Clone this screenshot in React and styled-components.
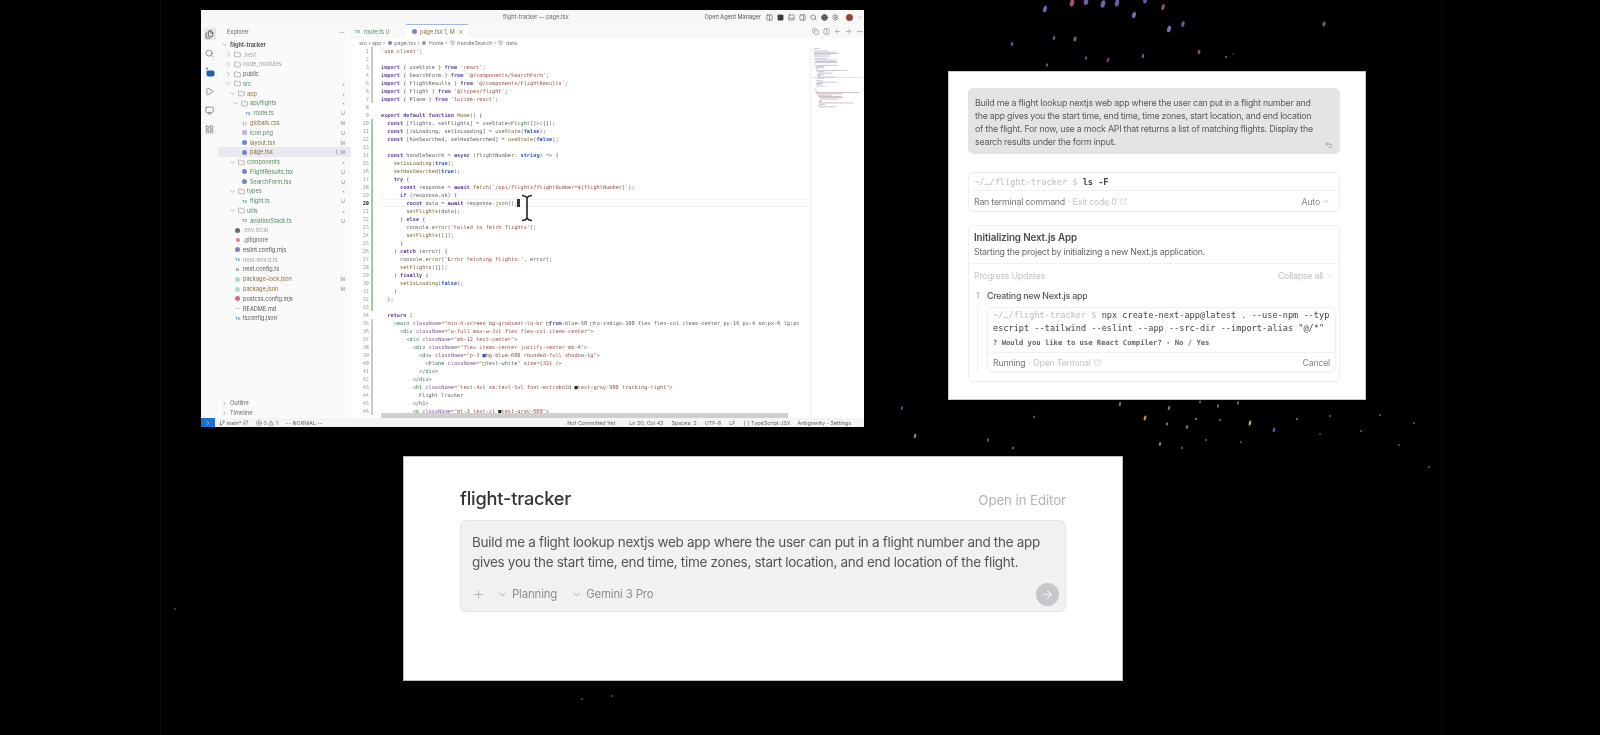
import React from 'react';
import styled, { createGlobalStyle } from 'styled-components';
import {
  ArrowLeft,
  ArrowRight,
  Box,
  ChevronDown,
  ChevronRight,
  ChevronUp,
  Copy,
  Ellipsis,
  Files,
  Folder,
  GitBranch,
  Globe,
  Monitor,
  PanelBottom,
  PanelLeft,
  PanelRight,
  Play,
  Plus,
  RefreshCw,
  Search,
  Settings,
  SquareArrowOutUpRight,
  Undo2,
  X,
  LayoutGrid,
  Columns2,
  CircleX,
  TriangleAlert,
} from 'lucide-react';

const UI_FONT = `Inter, "Liberation Sans", sans-serif`;
const MONO_FONT = `"DejaVu Sans Mono", "Liberation Mono", monospace`;

const GlobalStyle = createGlobalStyle`
  html, body {
    margin: 0;
    background: #000;
    font-family: ${UI_FONT};
  }
`;

/* ---------- data ---------- */

const TREE = [
  { name: 'flight-tracker', pad: 3, kind: 'root', color: '#3c3c3c', bold: true },
  { name: '.next', pad: 7, kind: 'closed', color: '#a2a2a2' },
  { name: 'node_modules', pad: 7, kind: 'closed', color: '#a2a2a2' },
  { name: 'public', pad: 7, kind: 'closed', color: '#555' },
  { name: 'src', pad: 7, kind: 'open', color: '#4f7f5a', badge: '•' },
  { name: 'app', pad: 11, kind: 'open', color: '#8b7a3c', badge: '•' },
  { name: 'api/flights', pad: 14, kind: 'open', color: '#4f8a5f', badge: '•' },
  { name: 'route.ts', pad: 26.6, icon: 'ts', color: '#4f8a5f', badge: 'U' },
  { name: 'globals.css', pad: 23, icon: 'css', color: '#8b6b3c', badge: 'M' },
  { name: 'icon.png', pad: 23, icon: 'img', color: '#4f8a5f', badge: 'U' },
  { name: 'layout.tsx', pad: 23, icon: 'react', color: '#8b6b3c', badge: 'M' },
  { name: 'page.tsx', pad: 23, icon: 'react', color: '#8b6b3c', badge: '1, M', active: true },
  { name: 'components', pad: 11, kind: 'open', color: '#4f8a5f', badge: '•' },
  { name: 'FlightResults.tsx', pad: 23, icon: 'react', color: '#4f8a5f', badge: 'U' },
  { name: 'SearchForm.tsx', pad: 23, icon: 'react', color: '#4f8a5f', badge: 'U' },
  { name: 'types', pad: 11, kind: 'open', color: '#4f8a5f', badge: '•' },
  { name: 'flight.ts', pad: 23, icon: 'ts', color: '#4f8a5f', badge: 'U' },
  { name: 'utils', pad: 11, kind: 'open', color: '#4f8a5f', badge: '•' },
  { name: 'aviationStack.ts', pad: 23, icon: 'ts', color: '#4f8a5f', badge: 'U' },
  { name: '.env.local', pad: 16, icon: 'env', color: '#a2a2a2' },
  { name: '.gitignore', pad: 16, icon: 'git', color: '#666' },
  { name: 'eslint.config.mjs', pad: 16, icon: 'eslint', color: '#555' },
  { name: 'next-env.d.ts', pad: 16, icon: 'ts', color: '#a2a2a2' },
  { name: 'next.config.ts', pad: 16, icon: 'next', color: '#555' },
  { name: 'package-lock.json', pad: 16, icon: 'json', color: '#8b6b3c', badge: 'M' },
  { name: 'package.json', pad: 16, icon: 'json', color: '#8b6b3c', badge: 'M' },
  { name: 'postcss.config.mjs', pad: 16, icon: 'postcss', color: '#555' },
  { name: 'README.md', pad: 16, icon: 'md', color: '#555' },
  { name: 'tsconfig.json', pad: 16, icon: 'ts', color: '#555' },
];

const CODE = [
  `'use client';`,
  ``,
  `import { useState } from 'react';`,
  `import { SearchForm } from '@/components/SearchForm';`,
  `import { FlightResults } from '@/components/FlightResults';`,
  `import { Flight } from '@/types/flight';`,
  `import { Plane } from 'lucide-react';`,
  ``,
  `export default function Home() {`,
  `  const [flights, setFlights] = useState<Flight[]>([]);`,
  `  const [isLoading, setIsLoading] = useState(false);`,
  `  const [hasSearched, setHasSearched] = useState(false);`,
  ``,
  `  const handleSearch = async (flightNumber: string) => {`,
  `    setIsLoading(true);`,
  `    setHasSearched(true);`,
  `    try {`,
  '      const response = await fetch(`/api/flights?flightNumber=${flightNumber}`);',
  `      if (response.ok) {`,
  `        const data = await response.json();`,
  `        setFlights(data);`,
  `      } else {`,
  `        console.error('Failed to fetch flights');`,
  `        setFlights([]);`,
  `      }`,
  `    } catch (error) {`,
  `      console.error('Error fetching flights:', error);`,
  `      setFlights([]);`,
  `    } finally {`,
  `      setIsLoading(false);`,
  `    }`,
  `  };`,
  ``,
  `  return (`,
  `    <main className="min-h-screen bg-gradient-to-br □from-blue-50 □to-indigo-100 flex flex-col items-center py-16 px-4 sm:px-6 lg:px`,
  `      <div className="w-full max-w-3xl flex flex-col items-center">`,
  `        <div className="mb-12 text-center">`,
  `          <div className="flex items-center justify-center mb-4">`,
  `            <div className="p-3 ■bg-blue-600 rounded-full shadow-lg">`,
  `              <Plane className="□text-white" size={32} />`,
  `            </div>`,
  `          </div>`,
  `          <h1 className="text-4xl sm:text-5xl font-extrabold ■text-gray-900 tracking-tight">`,
  `            Flight Tracker`,
  `          </h1>`,
  `          <p className="mt-3 text-xl ■text-gray-600">`,
];

const TOKEN_RE = /(■(?=bg-blue))|([■□])|('[^']*'|`[^`]*`)|(className)(?==)|("[^"□■]*"?|[a-z0-9:-]+(?=[^"]*">?$)(?<=className=".*))|\b(import|from|export|default|function|const|async|await|try|catch|finally|if|else|return)\b|\b(true|false|string)\b|\b([a-zA-Z]+)(?=\()|(<\/?[a-zA-Z0-9]+)/g;

const CLASS_WORD = {
  1: 'blue',
  2: 'box',
  3: 'string',
  4: 'attr',
  5: 'string',
  6: 'keyword',
  7: 'literal',
  8: 'fn',
  9: 'tag',
};

const tokenize = (line) => {
  const out = [];
  let last = 0;
  for (const m of line.matchAll(TOKEN_RE)) {
    if (m.index > last) out.push({ text: line.slice(last, m.index), type: 'plain' });
    const group = m.findIndex((g, i) => i > 0 && g !== undefined);
    out.push({ text: m[0], type: CLASS_WORD[group] });
    last = m.index + m[0].length;
  }
  if (last < line.length) out.push({ text: line.slice(last), type: 'plain' });
  return out;
};

const SPARKS = [
  [1045, 9, '#7a7ad0', 1.9, 3.4], [1072, 3, '#c06080', 2.2, 3.6], [1086, 2, '#8a70c0', 2.2, 3],
  [1103, 4, '#8a6fc8', 2.2, 3.8], [1117, 3, '#7a70c8', 2.1, 3.6], [1145, 1, '#7a70c8', 1.8, 2.6],
  [1163, 7, '#c06060', 1.6, 3], [1134, 15, '#7f7fd0', 1.9, 3.2], [1169, 29, '#8a80d8', 1.9, 3.4],
  [1183, 24, '#6a78d0', 1.6, 2.8], [1324, 24, '#7a70c0', 1.5, 2.6], [1012, 44, '#6a7ab0', 1.2, 2],
  [1054, 38, '#6a7ab0', 1.2, 2], [1075, 39, '#b06090', 1.5, 2.6], [1086, 58, '#6a70b0', 1, 1.7],
  [1108, 60, '#905090', 1.3, 2.2], [1143, 56, '#6a70b0', 1.2, 2.2], [1199, 52, '#b06080', 1.4, 2.2],
  [1226, 57, '#777', 1, 1.2], [1233, 54, '#666', 0.7, 0.8], [1047, 65, '#777', 1, 1.8],
  [902, 408, '#6a70b0', 1, 1.8], [1034, 417, '#5a6a90', 1, 1.4], [915, 436, '#a8b060', 1.2, 2.2],
  [988, 440, '#6a78a0', 1, 1.8], [1013, 448, '#6a78a0', 1, 1.6], [1120, 404, '#7a8a9a', 1.2, 2.2],
  [1169, 408, '#7a8aa0', 1.2, 2.2], [1218, 406, '#7a8a9a', 1, 1.8], [1238, 403, '#7a8a8a', 1, 1.8],
  [1200, 402, '#6a7a7a', 0.9, 1.6], [1145, 418, '#e0b060', 1.3, 2.6], [1167, 424, '#7a8aa0', 1.1, 1.8],
  [1187, 427, '#7a8aa0', 1.2, 2], [1196, 419, '#8a9090', 1, 1.2], [1220, 420, '#7a8a9a', 0.9, 1.2],
  [1250, 423, '#e0c870', 1.3, 2.6], [1274, 430, '#6a70c0', 1.2, 2.2], [1297, 419, '#8a9090', 1, 1.1],
  [1330, 416, '#8a9090', 0.8, 1], [1380, 415, '#808888', 0.9, 0.9], [1414, 423, '#6a7090', 0.9, 1.2],
  [1361, 431, '#808888', 0.9, 1], [1320, 434, '#808888', 0.8, 0.8], [1399, 445, '#808888', 0.8, 1],
  [1429, 467, '#808888', 0.9, 1], [1206, 440, '#6a7a8a', 0.9, 1.2], [1241, 442, '#707a70', 0.8, 1.2],
  [1160, 444, '#8a90a0', 1.2, 2], [1182, 448, '#6a7a9a', 0.9, 1.4], [582, 699, '#777', 0.8, 1],
  [612, 696, '#777', 0.8, 1], [175, 609, '#667', 0.8, 1],
];

/* ---------- page ---------- */

const Page = styled.div`
  width: 1600px;
  height: 735px;
  background: #000;
  overflow: hidden;
`;

const Stage = styled.div`
  position: relative;
  margin-left: 160px;
  width: 1282px;
  height: 735px;
  box-sizing: border-box;
  border-left: 1px solid #0b0b0b;
  border-right: 1px solid #0b0b0b;
`;

const SparkField = styled.svg`
  position: absolute;
  left: -161px;
  top: 0;
  opacity: 0.85;
  filter: blur(0.4px);
`;

/* ---------- IDE window ---------- */

const IdeWindow = styled.div`
  position: absolute;
  left: 40px;
  top: 10px;
  width: 663px;
  height: 417px;
  display: flex;
  flex-direction: column;
  background: #fff;
  overflow: hidden;
  filter: blur(0.5px);
  color: #555;
`;

const TitleBar = styled.div`
  position: relative;
  flex: 0 0 14px;
  display: flex;
  align-items: center;
  justify-content: flex-end;
  padding-right: 2px;
  gap: 4px;
  background: #f7f7f7;
  font-size: 5.6px;
`;

const WindowTitle = styled.span`
  position: absolute;
  left: 302px;
  color: #666;
`;

const AgentLink = styled.span`
  color: #555;
  margin-right: 1px;
`;

const Avatar = styled.span`
  width: 7px;
  height: 7px;
  border-radius: 50%;
  margin-left: 3px;
  background: #8a4a38;
`;

const Body = styled.div`
  flex: 1;
  display: flex;
  min-height: 0;
`;

const ActivityBar = styled.div`
  flex: 0 0 17px;
  display: flex;
  flex-direction: column;
  align-items: center;
  padding-top: 4px;
  gap: 7.1px;
  background: #f8f8f8;
  color: #777;
`;

const ActivityItem = styled.div`
  width: 12px;
  height: 12px;
  display: flex;
  align-items: center;
  justify-content: center;
  border-radius: 2px;
  background: ${(p) => (p.$active ? '#e6e6e6' : 'transparent')};
  color: ${(p) => (p.$active ? '#444' : '#777')};
`;

const Sidebar = styled.div`
  flex: 0 0 133px;
  display: flex;
  flex-direction: column;
  background: #fafafa;
  font-size: 5.6px;
  white-space: nowrap;
`;

const SidebarHeader = styled.div`
  flex: 0 0 16px;
  display: flex;
  align-items: center;
  justify-content: space-between;
  padding: 0 6px 0 9px;
  color: #666;
`;

const TreeRow = styled.div`
  height: 9.77px;
  display: flex;
  align-items: center;
  gap: 2px;
  padding-left: ${(p) => p.$pad}px;
  padding-right: 6px;
  background: ${(p) => (p.$active ? '#e9e9ef' : 'transparent')};
  color: ${(p) => p.$color};
  font-weight: ${(p) => (p.$bold ? 600 : 400)};
`;

const TreeBadge = styled.span`
  margin-left: auto;
  color: #888;
  font-size: 5px;
`;

const SidebarFooter = styled.div`
  margin-top: auto;
  color: #666;
`;

const IconBox = styled.span`
  flex: 0 0 7px;
  height: 7px;
  display: flex;
  align-items: center;
  justify-content: center;
  color: ${(p) => p.$color || '#888'};
  font-size: 3.8px;
  font-weight: 700;
`;

const Dot = styled.span`
  width: ${(p) => p.$size || 5}px;
  height: ${(p) => p.$size || 5}px;
  border-radius: ${(p) => p.$radius || '50%'};
  background: ${(p) => p.$color};
`;

const Editor = styled.div`
  position: relative;
  flex: 1;
  display: flex;
  flex-direction: column;
  min-width: 0;
`;

const TabStrip = styled.div`
  flex: 0 0 14px;
  display: flex;
  background: #f8f8f8;
  font-size: 5.6px;
`;

const Tab = styled.div`
  display: flex;
  align-items: center;
  gap: 3px;
  width: ${(p) => p.$width}px;
  box-sizing: border-box;
  padding-left: ${(p) => (p.$active ? 6 : 3)}px;
  background: ${(p) => (p.$active ? '#fff' : 'transparent')};
  border-top: 1px solid ${(p) => (p.$active ? '#9db8dc' : 'transparent')};
  color: ${(p) => p.$color};
`;

const TabActions = styled.div`
  margin-left: auto;
  display: flex;
  align-items: center;
  gap: 4px;
  padding-right: 1px;
  color: #888;
`;

const Breadcrumb = styled.div`
  flex: 0 0 9px;
  display: flex;
  align-items: center;
  gap: 2.5px;
  padding-left: 8px;
  font-size: 5.4px;
  color: #777;
`;

const EditorBody = styled.div`
  flex: 1;
  display: flex;
  min-height: 0;
`;

const CodeArea = styled.div`
  flex: 1;
  min-width: 0;
  overflow: hidden;
`;

const CodeLine = styled.div`
  height: 8px;
  display: flex;
  align-items: center;
  font-family: ${MONO_FONT};
  font-size: 5.28px;
  white-space: pre;
`;

const CodeText = styled.span`
  flex: 1;
  line-height: 8px;
  ${(p) => p.$current && 'box-shadow: inset 0 1px 0 #f2f2f2, inset 0 -1px 0 #f2f2f2;'}
`;

const LineNumber = styled.span`
  flex: 0 0 18px;
  text-align: right;
  color: ${(p) => (p.$current ? '#222' : '#999')};
  font-weight: ${(p) => (p.$current ? 700 : 400)};
`;

const Marker = styled.span`
  flex: 0 0 2px;
  height: 8px;
  margin: 0 8px 0 2px;
  background: ${(p) => p.$color};
`;

const Token = styled.span`
  color: ${(p) =>
    ({
      plain: '#5a5a5a',
      keyword: '#5b3f8f',
      string: '#8c4f4a',
      attr: '#7a5a8a',
      literal: '#2c50a8',
      fn: '#6f6430',
      tag: '#40734f',
      box: '#222',
      blue: '#2a4fc0',
    })[p.$type]};
  font-weight: ${(p) => (p.$type === 'keyword' || p.$type === 'literal' ? 600 : 400)};
`;

const TextCursor = styled.span`
  position: absolute;
  left: 166px;
  top: 175px;
  width: 2.5px;
  height: 8px;
  background: #333;
`;

const Minimap = styled.svg`
  flex: 0 0 53px;
  border-left: 1px solid #f1f1f1;
`;

const ScrollThumb = styled.div`
  position: absolute;
  left: 30px;
  right: 76px;
  bottom: 0;
  height: 5px;
  background: #cfcfcf;
`;

const MouseCursor = styled.svg`
  position: absolute;
  left: 169px;
  top: 170px;
`;

const StatusBar = styled.div`
  flex: 0 0 9px;
  display: flex;
  align-items: center;
  background: #f4f4f4;
  font-size: 5.4px;
  color: #666;
  white-space: nowrap;
`;

const RemoteBox = styled.span`
  flex: 0 0 14px;
  height: 9px;
  margin-right: 4px;
  display: flex;
  align-items: center;
  justify-content: center;
  background: #1f6fd0;
  color: #fff;
`;

const StatusItem = styled.span`
  display: flex;
  align-items: center;
  gap: 1.5px;
  margin-left: ${(p) => p.$gap || 0}px;
`;

/* ---------- agent panel ---------- */

const AgentPanel = styled.div`
  position: absolute;
  left: 787px;
  top: 71px;
  width: 418px;
  height: 329px;
  box-sizing: border-box;
  padding: 16px 25px 0 19px;
  background: #fff;
  border: 1px solid #c8c8c8;
  filter: blur(0.4px);
  color: #555;
  font-size: 8.8px;
  letter-spacing: -0.22px;
`;

const UserMessage = styled.div`
  position: relative;
  height: 66px;
  box-sizing: border-box;
  padding: 8px 7px;
  border-radius: 5px;
  background: #e3e4e6;
  line-height: 13px;
  white-space: nowrap;
  color: #5a5a5a;
`;

const UndoIcon = styled.span`
  position: absolute;
  right: 7px;
  bottom: 5px;
  color: #8a8a8a;
  display: flex;
`;

const Card = styled.div`
  margin-top: ${(p) => p.$top}px;
  border: 1px solid #eeeeef;
  border-radius: 5px;
  background: #fff;
`;

const TermLine = styled.div`
  height: 18px;
  box-sizing: border-box;
  display: flex;
  align-items: center;
  padding-left: 5px;
  font-family: ${MONO_FONT};
  font-size: 8.6px;
  letter-spacing: 0;
  color: #bbb;
  white-space: pre;
  border-bottom: 1px solid #f1f1f1;
`;

const Strong = styled.span`
  color: #444;
  font-weight: 600;
`;

const MetaRow = styled.div`
  height: ${(p) => p.$height || 20}px;
  display: flex;
  align-items: center;
  gap: 3px;
  padding: 0 ${(p) => p.$right || 9}px 0 5px;
  color: #777;
`;

const Muted = styled.span`
  color: #c4c4c4;
  display: flex;
  align-items: center;
  gap: 3px;
`;

const RightSlot = styled.span`
  margin-left: auto;
  display: flex;
  align-items: center;
  gap: 3px;
  color: ${(p) => p.$color || '#888'};
`;

const TaskHead = styled.div`
  height: 38px;
  box-sizing: border-box;
  padding: 5px 5px 0;
  border-bottom: 1px solid #f1f1f1;
`;

const TaskTitle = styled.div`
  font-size: 9.8px;
  letter-spacing: -0.12px;
  line-height: 14px;
  font-weight: 600;
  color: #4a4a4a;
`;

const TaskSub = styled.div`
  line-height: 14px;
  color: #666;
`;

const StepRow = styled.div`
  height: 18px;
  display: flex;
  align-items: center;
  padding-left: 7px;
  font-weight: 500;
  color: #555;
`;

const StepNumber = styled.span`
  flex: 0 0 11px;
  color: #aaa;
  font-size: 8px;
`;

const StepBody = styled.div`
  margin: 3px 3px 9px 8px;
  padding-left: 9px;
  border-left: 1px solid #eee;
`;

const ConsoleCard = styled.div`
  border: 1px solid #f1f1f1;
  border-radius: 5px;
  box-shadow: 0 1px 2px rgba(0, 0, 0, 0.05);
`;

const ConsoleOutput = styled.div`
  height: 45px;
  box-sizing: border-box;
  padding: 1px 5px 0;
  font-family: ${MONO_FONT};
  font-size: 8.6px;
  letter-spacing: 0;
  line-height: 13px;
  color: #444;
  white-space: pre;
  border-bottom: 1px solid #f1f1f1;
`;

const ConsolePrompt = styled.span`
  color: #bbb;
`;

const ConsoleQuestion = styled.div`
  font-size: 7.2px;
  line-height: 15px;
  font-weight: 600;
  color: #666;
`;

/* ---------- prompt window ---------- */

const PromptWindow = styled.div`
  position: absolute;
  left: 242px;
  top: 456px;
  width: 720px;
  height: 225px;
  box-sizing: border-box;
  padding: 30px 56px 0;
  background: #fff;
  border: 1px solid #bdbdbd;
  filter: blur(0.4px);
`;

const PromptHeader = styled.div`
  display: flex;
  align-items: center;
  justify-content: space-between;
  height: 22px;
  margin-bottom: 11px;
`;

const ProjectName = styled.h1`
  margin: 0;
  font-size: 18.2px;
  font-weight: 500;
  color: #333;
  letter-spacing: -0.2px;
`;

const OpenEditor = styled.span`
  font-size: 13.3px;
  letter-spacing: -0.1px;
  padding-top: 4px;
  color: #b4b4b4;
`;

const PromptBox = styled.div`
  height: 92px;
  box-sizing: border-box;
  padding: 11px 11px 0;
  background: #f0f1f3;
  border: 1px solid #e2e3e5;
  border-radius: 6px;
`;

const PromptText = styled.div`
  font-size: 13.5px;
  letter-spacing: -0.3px;
  line-height: 20px;
  color: #555;
  white-space: nowrap;
`;

const PromptToolbar = styled.div`
  display: flex;
  align-items: center;
  margin-top: 10px;
  height: 24px;
  color: #a4a4a4;
  font-size: 11.4px;
  letter-spacing: -0.15px;
`;

const ModeButton = styled.span`
  display: flex;
  align-items: center;
  gap: 4px;
  margin-left: ${(p) => p.$gap}px;
  color: ${(p) => p.$color};
`;

const SendButton = styled.span`
  margin-left: auto;
  margin-right: -5px;
  width: 23px;
  height: 23px;
  border-radius: 50%;
  display: flex;
  align-items: center;
  justify-content: center;
  background: #c6c7ca;
  color: #f1f1f1;
`;

/* ---------- pieces ---------- */

const FileIcon = ({ type }) => {
  switch (type) {
    case 'ts':
      return <IconBox $color="#5f8fb0">TS</IconBox>;
    case 'css':
      return <IconBox $color="#7a8aa0">{'{ }'}</IconBox>;
    case 'img':
      return (
        <IconBox>
          <Dot $size={5} $radius="1px" $color="#c8b6e2" />
        </IconBox>
      );
    case 'react':
      return (
        <IconBox>
          <Dot $color="#7484c8" />
        </IconBox>
      );
    case 'env':
      return (
        <IconBox>
          <Dot $color="#6a6a6a" />
        </IconBox>
      );
    case 'git':
      return (
        <IconBox>
          <Dot $size={4} $color="#d8808a" />
        </IconBox>
      );
    case 'eslint':
      return (
        <IconBox>
          <Dot $color="#8080c0" />
        </IconBox>
      );
    case 'next':
      return <IconBox $color="#777">N</IconBox>;
    case 'json':
      return (
        <IconBox>
          <Dot $color="#a8dcd0" />
        </IconBox>
      );
    case 'postcss':
      return (
        <IconBox>
          <Dot $color="#d86a80" />
        </IconBox>
      );
    default:
      return <IconBox $color="#8a8a8a">—</IconBox>;
  }
};

const TreeItem = ({ item }) => (
  <TreeRow $pad={item.pad} $color={item.color} $active={item.active} $bold={item.bold}>
    {item.kind && (
      <IconBox>
        {item.kind === 'closed' ? <ChevronRight size={7} /> : <ChevronDown size={7} />}
      </IconBox>
    )}
    {item.kind && item.kind !== 'root' && (
      <IconBox>
        <Folder size={7} />
      </IconBox>
    )}
    {item.icon && <FileIcon type={item.icon} />}
    <span>{item.name}</span>
    {item.badge && <TreeBadge>{item.badge}</TreeBadge>}
  </TreeRow>
);

const markerColor = (n) => {
  if (n >= 10 && n <= 33) return '#9ccf9f';
  if (n <= 7 || (n >= 35 && n <= 46)) return '#c4c8d0';
  return 'transparent';
};

const Code = () => (
  <CodeArea>
    {CODE.map((line, i) => (
      <CodeLine key={i}>
        <LineNumber $current={i === 19}>{i + 1}</LineNumber>
        <Marker $color={markerColor(i + 1)} />
        <CodeText $current={i === 19}>
          {tokenize(line).map((t, j) => (
            <Token key={j} $type={t.type}>
              {t.text}
            </Token>
          ))}
        </CodeText>
      </CodeLine>
    ))}
  </CodeArea>
);

const SourceControlIcon = () => (
  <svg width="10" height="10" viewBox="0 0 10 10">
    <circle cx="2" cy="1.5" r="1" fill="#5a7fa8" />
    <path d="M2 2.5v2" stroke="#5a7fa8" strokeWidth="0.7" />
    <rect x="1.5" y="3.5" width="8" height="6" rx="2" fill="#1f5fa8" />
  </svg>
);

const MinimapDrawing = () => (
  <Minimap width="53" height="371" viewBox="0 0 53 371">
    <rect x="0" y="30" width="52" height="0.8" fill="#ecd6be" />
    {CODE.map((line, i) => {
      const indent = line.length - line.trimStart().length;
      return (
        <rect
          key={i}
          x={3 + indent * 0.45}
          y={1 + i * 1.3}
          width={Math.min(line.trim().length * 0.42, 44)}
          height="0.7"
          fill={i > 33 ? '#bda8a8' : '#b2b2c8'}
        />
      );
    })}
  </Minimap>
);

const Ide = () => (
  <IdeWindow>
    <TitleBar>
      <WindowTitle>flight-tracker — page.tsx</WindowTitle>
      <AgentLink>Open Agent Manager</AgentLink>
      <Columns2 size={7} />
      <PanelLeft size={7} fill="#333" />
      <PanelBottom size={7} />
      <PanelRight size={7} />
      <Search size={7} />
      <Globe size={7} color="#333" fill="#888" />
      <Settings size={7} />
      <Avatar />
      <ChevronDown size={5} />
    </TitleBar>
    <Body>
      <ActivityBar>
        <ActivityItem $active>
          <Files size={9} />
        </ActivityItem>
        <ActivityItem>
          <Search size={9} />
        </ActivityItem>
        <ActivityItem>
          <SourceControlIcon />
        </ActivityItem>
        <ActivityItem>
          <Play size={9} />
        </ActivityItem>
        <ActivityItem>
          <Monitor size={9} />
        </ActivityItem>
        <ActivityItem>
          <LayoutGrid size={9} />
        </ActivityItem>
      </ActivityBar>
      <Sidebar>
        <SidebarHeader>
          <span>Explorer</span>
          <Ellipsis size={7} color="#aaa" />
        </SidebarHeader>
        {TREE.map((item) => (
          <TreeItem key={item.name} item={item} />
        ))}
        <SidebarFooter>
          <TreeRow $pad={3} $color="#666">
            <IconBox>
              <ChevronRight size={7} />
            </IconBox>
            <span>Outline</span>
          </TreeRow>
          <TreeRow $pad={3} $color="#666">
            <IconBox>
              <ChevronRight size={7} />
            </IconBox>
            <span>Timeline</span>
          </TreeRow>
        </SidebarFooter>
      </Sidebar>
      <Editor>
        <TabStrip>
          <Tab $width={55} $color="#4f8a5f">
            <IconBox $color="#5f8fb0">TS</IconBox>
            <span>route.ts U</span>
          </Tab>
          <Tab $width={62} $active $color="#8b6b3c">
            <Dot $color="#7484c8" />
            <span>page.tsx 1, M</span>
            <X size={6} color="#666" />
          </Tab>
          <TabActions>
            <Copy size={7} />
            <Columns2 size={7} />
            <ArrowLeft size={7} />
            <ArrowRight size={7} />
            <Ellipsis size={7} />
          </TabActions>
        </TabStrip>
        <Breadcrumb>
          src › app › <Dot $size={4} $color="#7484c8" /> page.tsx › <Dot $size={4} $color="#999" />{' '}
          Home › <Box size={5} /> handleSearch › <Box size={5} /> data
        </Breadcrumb>
        <EditorBody>
          <Code />
          <MinimapDrawing />
        </EditorBody>
        <TextCursor />
        <MouseCursor width="14" height="28" viewBox="0 0 14 28">
          <path
            d="M2 1.5c2.5 0 4 .8 5 2.2 1-1.4 2.5-2.2 5-2.2M7 3.7v20.6M2 26.5c2.5 0 4-.8 5-2.2 1 1.4 2.5 2.2 5 2.2"
            fill="none"
            stroke="#222"
            strokeWidth="1.6"
          />
        </MouseCursor>
        <ScrollThumb />
      </Editor>
    </Body>
    <StatusBar>
      <RemoteBox>
        <ChevronRight size={6} />
      </RemoteBox>
      <StatusItem>
        <GitBranch size={6} /> main* <RefreshCw size={5} />
      </StatusItem>
      <StatusItem $gap={8}>
        <CircleX size={6} /> 0 <TriangleAlert size={6} /> 1
      </StatusItem>
      <StatusItem $gap={8}>-- NORMAL --</StatusItem>
      <StatusItem $gap={245}>Not Committed Yet</StatusItem>
      <StatusItem $gap={14}>Ln 20, Col 43</StatusItem>
      <StatusItem $gap={8}>Spaces: 2</StatusItem>
      <StatusItem $gap={8}>UTF-8</StatusItem>
      <StatusItem $gap={8}>LF</StatusItem>
      <StatusItem $gap={8}>{'{ }'} TypeScript JSX</StatusItem>
      <StatusItem $gap={7}>Antigravity - Settings</StatusItem>
    </StatusBar>
  </IdeWindow>
);

const Agent = () => (
  <AgentPanel>
    <UserMessage>
      Build me a flight lookup nextjs web app where the user can put in a flight number and
      <br />
      the app gives you the start time, end time, time zones, start location, and end location
      <br />
      of the flight. For now, use a mock API that returns a list of matching flights. Display the
      <br />
      search results under the form input.
      <UndoIcon>
        <Undo2 size={8} />
      </UndoIcon>
    </UserMessage>
    <Card $top={18}>
      <TermLine>
        ~/…/flight-tracker $ <Strong>ls -F</Strong>
      </TermLine>
      <MetaRow>
        Ran terminal command <Muted>· Exit code 0 <SquareArrowOutUpRight size={7} /></Muted>
        <RightSlot>
          Auto <ChevronUp size={7} />
        </RightSlot>
      </MetaRow>
    </Card>
    <Card $top={13}>
      <TaskHead>
        <TaskTitle>Initializing Next.js App</TaskTitle>
        <TaskSub>Starting the project by initializing a new Next.js application.</TaskSub>
      </TaskHead>
      <MetaRow $height={22} $right={6}>
        <Muted>Progress Updates</Muted>
        <RightSlot $color="#c0c0c0">
          Collapse all <ChevronDown size={7} />
        </RightSlot>
      </MetaRow>
      <StepRow>
        <StepNumber>1</StepNumber>
        Creating new Next.js app
      </StepRow>
      <StepBody>
        <ConsoleCard>
          <ConsoleOutput>
            <ConsolePrompt>~/…/flight-tracker $ </ConsolePrompt>npx create-next-app@latest . --use-npm --typ
            <br />
            escript --tailwind --eslint --app --src-dir --import-alias "@/*"
            <ConsoleQuestion>? Would you like to use React Compiler? › No / Yes</ConsoleQuestion>
          </ConsoleOutput>
          <MetaRow $height={18} $right={5}>
            Running <Muted>· Open Terminal <SquareArrowOutUpRight size={7} /></Muted>
            <RightSlot>Cancel</RightSlot>
          </MetaRow>
        </ConsoleCard>
      </StepBody>
    </Card>
  </AgentPanel>
);

const Prompt = () => (
  <PromptWindow>
    <PromptHeader>
      <ProjectName>flight-tracker</ProjectName>
      <OpenEditor>Open in Editor</OpenEditor>
    </PromptHeader>
    <PromptBox>
      <PromptText>
        Build me a flight lookup nextjs web app where the user can put in a flight number and the app
        <br />
        gives you the start time, end time, time zones, start location, and end location of the flight.
      </PromptText>
      <PromptToolbar>
        <Plus size={13} strokeWidth={1.4} />
        <ModeButton $gap={12} $color="#8e8e8e">
          <ChevronDown size={11} strokeWidth={1.5} /> Planning
        </ModeButton>
        <ModeButton $gap={14} $color="#8e8e8e">
          <ChevronDown size={11} strokeWidth={1.5} /> Gemini 3 Pro
        </ModeButton>
        <SendButton>
          <ArrowRight size={13} strokeWidth={2} />
        </SendButton>
      </PromptToolbar>
    </PromptBox>
  </PromptWindow>
);

const App = () => (
  <Page>
    <GlobalStyle />
    <Stage>
      <SparkField width="1600" height="735" viewBox="0 0 1600 735">
        {SPARKS.map(([x, y, color, rx, ry]) => (
          <ellipse
            key={`${x}-${y}`}
            cx={x}
            cy={y}
            rx={rx}
            ry={ry}
            fill={color}
            transform={`rotate(15 ${x} ${y})`}
          />
        ))}
      </SparkField>
      <Ide />
      <Agent />
      <Prompt />
    </Stage>
  </Page>
);

export default App;
